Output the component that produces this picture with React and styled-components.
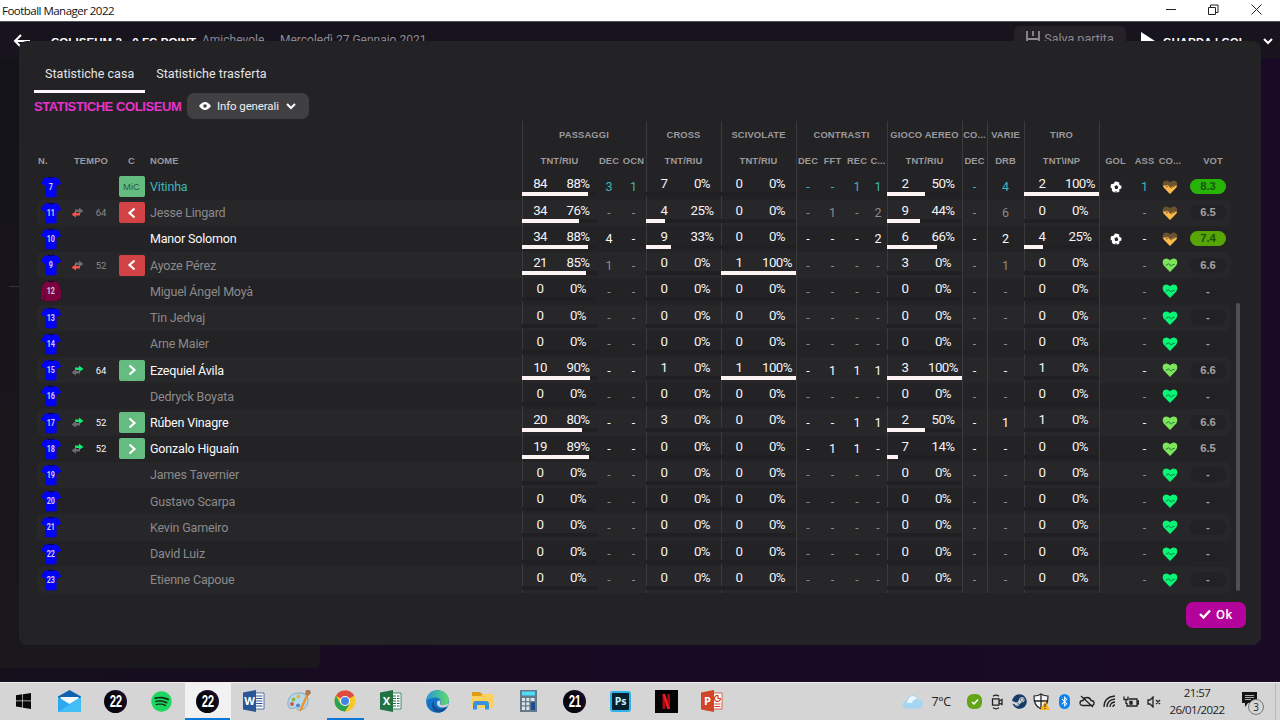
import * as React from 'react';
import styled, { createGlobalStyle, css } from 'styled-components';
import { FaSpotify, FaSteam, FaBluetoothB } from 'react-icons/fa';

const GlobalStyle = createGlobalStyle`
  * {
    box-sizing: border-box;
  }

  body {
    margin: 0;
    overflow: hidden;
    background: #170a21;
    font-family: Roboto, 'Liberation Sans', sans-serif;
  }

  svg {
    display: block;
    flex: none;
  }
`;

const Screen = styled.div`
  position: relative;
  width: 1280px;
  height: 720px;
  overflow: hidden;
  display: flex;
  flex-direction: column;
`;

/* window title bar */

const TitleBar = styled.div`
  height: 22px;
  flex: none;
  display: flex;
  align-items: center;
  justify-content: space-between;
  padding: 0 18px 0 2px;
  background: #fff;
  color: #111;
  font-family: 'Open Sans', sans-serif;
  font-size: 11.5px;
  letter-spacing: -0.52px;
  border-bottom: 1px solid #55525a;
`;

const WindowButtons = styled.div`
  display: flex;
  gap: 32px;
  margin-top: -2px;
`;

/* game screen behind the dialog */

const Game = styled.div`
  height: 660px;
  flex: none;
  display: flex;
  flex-direction: column;
  background: linear-gradient(90deg, #16101d 0%, #170a21 35%, #1a0a26 100%);
`;

const GameHeader = styled.div`
  height: 37px;
  flex: none;
  display: flex;
  align-items: center;
  padding: 0 7px 0 13px;
  background: #18141d;
  color: #8d8a91;
  font-size: 12px;
  white-space: nowrap;
`;

const MatchTitle = styled.div`
  margin: 0 5px 0 20px;
  padding-top: 2px;
  width: 146px;
  color: #fff;
  font-family: 'Liberation Sans', sans-serif;
  font-size: 11.5px;
  font-weight: 700;
  letter-spacing: 0.06px;
`;

const MatchInfo = styled.div`
  width: ${(props) => props.$width}px;
  margin-top: -1px;
`;

const SaveButton = styled.div`
  margin-left: auto;
  width: 112px;
  height: 28px;
  margin-top: -1px;
  padding-bottom: 4px;
  display: flex;
  align-items: center;
  justify-content: center;
  gap: 4px;
  border-radius: 6px;
  background: #252129;
  color: #8e8b90;
  font-size: 12.5px;
`;

const WatchButton = styled.div`
  display: flex;
  align-items: center;
  gap: 8px;
  margin-left: 15px;
  width: 122px;
  color: #fff;
  font-family: 'Liberation Sans', sans-serif;
  font-size: 11px;
  font-weight: 700;
  letter-spacing: 0.15px;
`;

const WatchLabel = styled.span`
  padding-top: 2px;
`;

const SidePanel = styled.div`
  width: 320px;
  height: 609px;
  border-radius: 0 0 6px 0;
  background: linear-gradient(180deg, #15131a, #1a181c);
`;

const PanelRule = styled.div`
  height: 228px;
  margin-left: 9px;
  border-bottom: 1px solid #37343a;
`;

/* dialog */

const Dialog = styled.div`
  position: absolute;
  left: 19px;
  top: 41px;
  width: 1242px;
  height: 604px;
  padding: 15px 15px 16px;
  display: flex;
  flex-direction: column;
  border-radius: 8px;
  background: #232224;
`;

const Tabs = styled.div`
  height: 37px;
  flex: none;
  display: flex;
`;

const Tab = styled.div`
  height: 37px;
  padding: 0 11px;
  line-height: 35px;
  color: #e6e4e6;
  font-size: 12.5px;
  letter-spacing: 0.03px;
  border-bottom: 3px solid ${(props) => (props.$active ? '#fdf6fa' : 'transparent')};
`;

const Toolbar = styled.div`
  height: 28px;
  flex: none;
  display: flex;
  align-items: flex-start;
  gap: 5px;
`;

const Heading = styled.div`
  width: 148px;
  line-height: 28px;
  color: #e832cd;
  font-family: 'Liberation Sans', sans-serif;
  font-size: 13px;
  font-weight: 700;
  letter-spacing: -0.4px;
  white-space: nowrap;
`;

const ViewSelect = styled.div`
  width: 122px;
  height: 26px;
  display: flex;
  align-items: center;
  padding: 0 13px 0 12px;
  border-radius: 7px;
  background: #403f41;
  color: #f0eef0;
  font-size: 11.5px;
  letter-spacing: -0.12px;
`;

const ViewLabel = styled.span`
  flex: 1;
  padding-left: 6px;
`;

const TableArea = styled.div`
  display: flex;
  gap: 5px;
  padding-left: 3px;
`;

const Table = styled.div`
  width: 1194px;
`;

const gridColumns = `27px 26px 22px 38px 372px 75px 24px 25px 75px 75px
  24px 25px 24px 18px 75px 25px 37px 75px 33px 25px 26px 48px`;

const separator = css`
  box-shadow: inset 1px 0 0 #3b3a3c;
`;

const HeaderRow = styled.div`
  display: grid;
  grid-template-columns: ${gridColumns};
  height: 26.22px;
`;

const HeaderCell = styled.div`
  grid-column: span ${(props) => props.$span || 1};
  display: flex;
  align-items: center;
  justify-content: ${(props) => props.$align || 'center'};
  padding: ${(props) => props.$pad || '0'};
  color: #9b999b;
  font-family: 'Liberation Sans', sans-serif;
  font-size: 9.4px;
  font-weight: 700;
  letter-spacing: 0.14px;
  white-space: nowrap;
  ${(props) => props.$line && separator}
`;

const tones = {
  self: '#40b4ba',
  dim: '#8c8a8c',
  bright: '#fbf9fb',
};

const Row = styled.div`
  display: grid;
  grid-template-columns: ${gridColumns};
  height: 26.22px;
  border-radius: 5px;
  background: ${(props) => (props.$odd ? '#272628' : 'transparent')};
  color: ${(props) => tones[props.$tone]};
`;

const Cell = styled.div`
  display: flex;
  align-items: center;
  justify-content: center;
  font-size: 12.5px;
  ${(props) => props.$line && separator}
`;

const NameCell = styled(Cell)`
  justify-content: flex-start;
  font-size: 12.5px;
  letter-spacing: -0.18px;
  white-space: nowrap;
`;

const MinuteCell = styled(Cell)`
  font-size: 9.5px;
`;

const RoleBadge = styled.div`
  width: 26px;
  height: 21px;
  margin-left: 1px;
  display: flex;
  align-items: center;
  justify-content: center;
  border-radius: 2px;
  background: ${(props) => (props.$out ? '#d24346' : '#65bc80')};
  color: #2c5b3b;
  font-family: 'Liberation Sans', sans-serif;
  font-size: 9.5px;
`;

const RatioCell = styled.div`
  display: flex;
  flex-direction: column;
  padding-top: 2px;
  ${separator}
`;

const RatioValues = styled.div`
  display: grid;
  grid-template-columns: 36px 40px;
  height: 17px;
  line-height: 18px;
  text-align: center;
  color: #f5f3f5;
  font-size: 13.3px;
  letter-spacing: -0.6px;
`;

const Track = styled.div`
  height: 4px;
  background: #201f21;
`;

const Fill = styled.div`
  height: 4px;
  background: #fdf3f3;
`;

const VoteCell = styled(Cell)`
  justify-content: flex-start;
  padding-left: 7px;
`;

const Vote = styled.div`
  width: 36px;
  height: 15px;
  line-height: 15px;
  text-align: center;
  border-radius: 8px;
  background: ${(props) => props.$color || '#222123'};
  color: ${(props) => (props.$color ? '#17570c' : '#a3a1a3')};
  font-family: 'Liberation Sans', sans-serif;
  font-size: 11.3px;
  font-weight: 700;
`;

const Scrollbar = styled.div`
  width: 4px;
  height: 288px;
  margin-top: 182px;
  border-radius: 2px;
  background: #504f51;
`;

const DialogFooter = styled.div`
  margin-top: 9px;
  display: flex;
  justify-content: flex-end;
`;

const OkButton = styled.div`
  width: 60px;
  height: 26px;
  display: flex;
  align-items: center;
  justify-content: center;
  gap: 5px;
  padding-bottom: 1px;
  border-radius: 7px;
  background: #b3039a;
  color: #fff;
  font-size: 13px;
  font-weight: 500;
  letter-spacing: 0.6px;
`;

/* taskbar */

const Taskbar = styled.div`
  height: 38px;
  flex: none;
  display: flex;
  background: #d5d5d5;
  border-top: 1px solid #efefef;
  color: #222;
  font-family: 'Open Sans', sans-serif;
`;

const TaskItem = styled.div`
  width: ${(props) => props.$width || 45.9}px;
  height: 37px;
  display: flex;
  align-items: center;
  justify-content: center;
  padding-bottom: 1px;
  background: ${(props) => (props.$active ? '#f1f1f1' : 'transparent')};
`;

const RunningItem = styled(TaskItem)`
  padding: 1px 0 0;
  flex-direction: column;
  justify-content: space-between;
`;

const RunningLine = styled.div`
  width: ${(props) => props.$width}px;
  height: 2px;
  background: #0a78d6;
`;

const RunningIcon = styled.div`
  flex: 1;
  display: flex;
  align-items: center;
`;

const GameLogo = styled.div`
  width: 23px;
  height: 23px;
  display: flex;
  align-items: center;
  justify-content: center;
  border-radius: 50%;
  background: radial-gradient(circle at 30% 60%, #08060d 45%, #2c1242);
  color: #fff;
  font-family: 'Liberation Sans', sans-serif;
  font-size: 13px;
  font-weight: 700;
  letter-spacing: -0.5px;
`;

const Condensed = styled.span`
  transform: scale(0.88, 1.2);
`;

const SpotifyDisc = styled.div`
  border-radius: 50%;
  background: radial-gradient(circle, #10301c 60%, transparent 62%);
`;

const Photoshop = styled.div`
  width: 21px;
  height: 21px;
  display: flex;
  align-items: center;
  justify-content: center;
  border: 2px solid #2cb3e8;
  border-radius: 3px;
  background: #07202f;
  color: #c9f0ff;
  font-size: 10.5px;
  font-weight: 700;
`;

const Tray = styled.div`
  margin-left: auto;
  display: flex;
  align-items: center;
`;

const TrayItem = styled.div`
  width: 22.4px;
  display: flex;
  align-items: center;
  justify-content: center;
`;

const Temperature = styled.div`
  width: 40px;
  padding-left: 8px;
  font-size: 12.5px;
  letter-spacing: -0.4px;
`;

const Dot = styled.div`
  width: ${(props) => props.$width || 15}px;
  height: 15px;
  display: flex;
  align-items: center;
  justify-content: center;
  border-radius: 6px;
  background: ${(props) => props.$color};
  color: #fff;
  font-size: 11px;
`;

const Clock = styled.div`
  width: 65px;
  padding: 0 1px 2px 0;
  text-align: center;
  font-size: 11.5px;
  line-height: 17px;
  letter-spacing: -0.6px;
`;

const Notifications = styled.div`
  width: 46px;
  height: 37px;
  padding: 9px 0 0 12px;
  margin-right: 4px;
  position: relative;
  border-right: 1px solid #b9b9b9;
`;

const Count = styled.div`
  position: absolute;
  left: 18px;
  top: 16px;
  width: 16px;
  height: 16px;
  line-height: 14px;
  text-align: center;
  border: 1px solid #777;
  border-radius: 50%;
  background: #d5d5d5;
  font-size: 10px;
`;

/* icons */

function Shirt({ number, keeper }) {
  const fill = keeper ? '#7d0340' : '#0202f5';
  return (
    <svg width="22" height="22" viewBox="0 0 22 22">
      {keeper ? (
        <path d="M7.500 1h7l4.500 2.500L21 11v8.500h-3V21H4v-1.500H1V11l2-7.500zM4.500 11v9M17.500 11v9" fill={fill} stroke="#3c0421" strokeWidth="0.400" />
      ) : (
        <path d="M8 1h6l4 1.300 3.200 5.200-4 2.200-.7-.5V21q-5.400.8-10.900 0V9.200l-.7.500-4-2.200 3.200-5.200z" fill={fill} />
      )}
      <path d="M8 1q3 2 6 0" fill="none" stroke="#050535" strokeWidth="1" />
      <text
        transform="translate(10.800 13.600) scale(0.8 1.1)"
        textAnchor="middle"
        fill="#cfcde0"
        fontFamily="Roboto, sans-serif"
        fontSize="9"
        fontWeight="700"
      >
        {number}
      </text>
    </svg>
  );
}

function SwapIcon({ incoming }) {
  return (
    <svg width="13" height="11" viewBox="0 0 13 11">
      <path d="M4 2.500h4V.500L12.500 4 8 7V5H4z" fill={incoming ? '#10ea70' : '#6c6b6d'} />
      <path d="M9 6H5V4L.500 7.500 5 10.500v-2h4z" fill={incoming ? '#6c6b6d' : '#f4524f'} />
    </svg>
  );
}

function Angle({ right }) {
  return (
    <svg width="10" height="12" viewBox="0 0 10 12" fill="none" stroke="#fff" strokeWidth="2.200">
      <path d={right ? 'M2.500 1.500L7.500 6l-5 4.500' : 'M7.500 1.500L2.500 6l5 4.500'} />
    </svg>
  );
}

function Chevron({ size = 10 }) {
  return (
    <svg width={size} height={size} viewBox="0 0 10 10" fill="none" stroke="#fff" strokeWidth="2">
      <path d="M1 3l4 4 4-4" />
    </svg>
  );
}

function Heart({ kind }) {
  const top = { tired: '#6a5130', good: '#7de45b', full: '#08f676' }[kind];
  const d = 'M8 15L1.700 8.500Q-.3 5.300 1.600 2.600 4.900.3 8 3.200q3.100-2.900 6.400-.6Q16.300 5.300 14.300 8.500z';
  return (
    <svg width="16" height="16" viewBox="0 0 16 16">
      <path d={d} fill={top} />
      {kind === 'tired' && <path d="M.8 6.500h3.700L6 5.800l3 2.500 2-1.500h4.200l-.9 1.700L8 15 1.700 8.500z" fill="#fdbb4c" />}
      <path
        d="M3.800 8h1L6.300 6.700l3 2.300L11 7.500h1.500"
        fill="none"
        stroke={kind === 'tired' ? '#71501f' : '#176b3c'}
        strokeWidth="0.9"
      />
    </svg>
  );
}

function Ball() {
  return (
    <svg width="12" height="12" viewBox="0 0 12 12">
      <circle cx="6" cy="6" r="5.500" fill="#fff" />
      <path d="M6.500 4l1.800 1.700-.8 2.200H5.200l-.8-2.400z" fill="#232224" />
      <path d="M3.200 0l1.500 1.700L3 3 .5 2.700zM9.500 1.200l2 2-.8 1.600L9 3.200zM.3 6.500l1.500.8.3 2.200-1.300-.3zM11.700 8l-1.500 2.300-1.200-.8.800-1.700zM4.500 10.500h2.500L6 12z" fill="#232224" />
    </svg>
  );
}

function OfficeIcon({ letter, color }) {
  return (
    <svg width="22" height="22" viewBox="0 0 22 22">
      <path d="M11 3h10v16H11z" fill="#fff" stroke={color} strokeWidth="0.800" />
      {letter === 'P' ? (
        <path d="M13.500 14h6M13.500 16.500h6M17 5.500a3 3 0 1 0 2.500 3H17z" fill="none" stroke={color} strokeWidth="1.200" />
      ) : (
        <path d="M13 6h6.500M13 8.500h6.500M13 11h6.500M13 13.500h6.500M13 16h6.500" stroke={color} strokeWidth="1.100" />
      )}
      {letter === 'X' && <path d="M16.500 4v14" stroke="#fff" />}
      <path d="M0 2.500L13 0v22L0 19.500z" fill={color} />
      <text x="6.500" y="15.200" textAnchor="middle" fill="#fff" fontFamily="Open Sans, sans-serif" fontSize="11" fontWeight="700">
        {letter}
      </text>
    </svg>
  );
}

function WindowsIcon() {
  return (
    <svg width="15" height="16" viewBox="0 0 15 16" fill="#080808">
      <path d="M0 2.200l6.300-.9v6.200H0zM7 1.200L15 0v7.500H7zM0 8.300h6.300v6.200L0 13.600zM7 8.300h8V16l-8-1.200z" />
    </svg>
  );
}

function MailIcon() {
  return (
    <svg width="23" height="22" viewBox="0 0 23 22">
      <path d="M0 6.500L11.500 0 23 6.500V15H0z" fill="#0f62ae" />
      <path d="M2.500 7h18v9h-18z" fill="#f4f8fb" />
      <path d="M0 7l11.500 7L23 7v15H0z" fill="#2ba8ee" />
      <path d="M0 22L23 7v15z" fill="#43bdf5" />
    </svg>
  );
}

function PaintIcon() {
  return (
    <svg width="24" height="24" viewBox="0 0 24 24">
      <path d="M11 4C4 4.500 0 10 1 16q1.500 5 5.500 3c3-1.500 3 2.500 7 2 5-.7 8-6 7.500-11Q20 3.500 11 4z" fill="#b6d9ec" stroke="#7daac5" />
      <circle cx="6.500" cy="10.500" r="1.900" fill="#8cb942" />
      <circle cx="11.500" cy="7.500" r="1.900" fill="#e8b43c" />
      <circle cx="5" cy="15" r="1.900" fill="#d84f46" />
      <circle cx="11" cy="16.500" r="2" fill="#5282c7" />
      <path d="M20 4l2 1-7 16-2.500 2 .5-4z" fill="#ef932c" />
      <path d="M19 1l4 0 1 3-3 3-3-2z" fill="#a87b50" />
    </svg>
  );
}

function ChromeIcon() {
  return (
    <svg width="22" height="22" viewBox="0 0 22 22">
      <circle cx="11" cy="11" r="10.500" fill="#f7c829" />
      <path d="M11 11L1.900 5.800A10.500 10.500 0 0 1 20.100 5.800z" fill="#df4b3e" />
      <path d="M11 5.500h9A10.500 10.500 0 0 0 11 .5z" fill="#df4b3e" />
      <path d="M1.900 5.800A10.500 10.500 0 0 0 11 21.500l4.700-7.800L11 16l-4.700-2.600z" fill="#2ba152" />
      <circle cx="11" cy="11" r="5" fill="#fff" />
      <circle cx="11" cy="11" r="4" fill="#4285e8" />
    </svg>
  );
}

function EdgeIcon() {
  return (
    <svg width="23" height="23" viewBox="0 0 23 23">
      <defs>
        <linearGradient id="edge-top" x1="0" x2="1">
          <stop offset="0" stopColor="#2498dc" />
          <stop offset="1" stopColor="#61dc67" />
        </linearGradient>
      </defs>
      <circle cx="11.500" cy="11.500" r="11.300" fill="#1174c7" />
      <path d="M.2 11C1 4 6 .2 11.500.2c7 0 11.300 5 11.300 9.500 0 4-3 6-6 5.600-2.300-.2-3-1.300-2-3 .7-4-5-6-9.300-4Q1.500 9 .2 11z" fill="url(#edge-top)" />
      <path d="M8.500 10c-2.500 4 1 9 6 9q4-.2 7-3-2 5.500-8 6.500c-7 .5-10-8-5-12.500z" fill="#124f93" />
      <path d="M14.500 11.500c-1 2-.5 3.800 2.300 3.800q3 0 5.900-2.300-.3 2-1.700 3.500c-5 2.500-11 .5-10-4.500 1-2 3-2 3.500-.5z" fill="#d5d5d5" />
    </svg>
  );
}

function FolderIcon() {
  return (
    <svg width="21" height="18" viewBox="0 0 21 18">
      <path d="M0 0h8l2 2h10v4H0z" fill="#dc9d15" />
      <path d="M0 4h9l2-2h10v14H0z" fill="#fcd15c" />
      <path d="M1 17.500V12q0-3 3-3h10q3 0 3 3v5.500h-4V13H5v4.500z" fill="#3a92dc" />
    </svg>
  );
}

function CalculatorIcon() {
  return (
    <svg width="17" height="22" viewBox="0 0 17 22">
      <path d="M0 0h17v22H0z" fill="#66798a" />
      <path d="M2 1.500h13v4H2z" fill="#4fdcf5" />
      <path
        d="M2 8h3v3H2zM6.300 8h3v3h-3zM10.600 8h4v3h-4zM2 12.300h3v3H2zM6.300 12.300h3v3h-3zM2 16.600h3v3.400H2zM6.300 16.600h3v3.400h-3z"
        fill="#dce4ea"
      />
      <path d="M11 12.300h4V20h-4z" fill="#184e94" />
    </svg>
  );
}

function NetflixIcon() {
  return (
    <svg width="23" height="23" viewBox="0 0 23 23">
      <path d="M0 0h23v23H0z" fill="#050505" />
      <path d="M7.500 4h2.600v15H7.500zM12.300 4h2.600v15h-2.600z" fill="#b20710" />
      <path d="M7.500 4h2.600l4.800 15h-2.600z" fill="#ee1c24" />
    </svg>
  );
}

function WeatherIcon() {
  return (
    <svg width="21" height="15" viewBox="0 0 21 15">
      <path d="M5 14.500C-1 14.500-1 7.500 4 7.500 5 0 14-1.500 15.500 5c7-.5 7 9.500.5 9.500z" fill="#a6d5f4" />
      <path d="M5 9C6 1 13 0 15 5q-4 0-5 4z" fill="#eaf6fd" />
    </svg>
  );
}

const strokeProps = { fill: 'none', stroke: '#222', strokeWidth: 1.3 };

function CameraIcon() {
  return (
    <svg width="12" height="16" viewBox="0 0 12 16" {...strokeProps}>
      <path d="M1.500 4.800h6.500v6.400H1.500zM8 7l3-1.500v5L8 9M2 2.200q3-2 6 0M2 13.800q3 2 6 0" />
    </svg>
  );
}

function ShieldIcon() {
  return (
    <svg width="17" height="17" viewBox="0 0 17 17">
      <path d="M8 1Q5 3 1 3c0 6 1 10 7 13 6-3 7-7 7-13Q11 3 8 1z" fill="#f4f4f4" stroke="#222" strokeWidth="1.200" />
      <path d="M8 1v15M1.500 8h13" stroke="#222" strokeWidth="1.300" />
      <path d="M12 8l5 9H7z" fill="#f8b51d" />
      <path d="M12 11v3M12 15v1" stroke="#222" />
    </svg>
  );
}

function CloudOffIcon() {
  return (
    <svg width="16" height="13" viewBox="0 0 16 13" {...strokeProps}>
      <path d="M4 10.500c-4 0-4-5 0-5 1-4 7-4 8 0 4 0 4 5 .5 5zM2 1l12 11" />
    </svg>
  );
}

function WifiIcon() {
  return (
    <svg width="13" height="13" viewBox="0 0 13 13" {...strokeProps}>
      <path d="M1 12Q1 2 12 1M4 12q0-7 8-8M7 12q0-4.500 5-5M10 12q0-2 2-2" />
    </svg>
  );
}

function BatteryIcon() {
  return (
    <svg width="16" height="12" viewBox="0 0 16 12" {...strokeProps}>
      <path d="M6 3h8v7H4V7M14 5h1.500v3H14M1 .5v3h4v-3M3 3.500V8" />
      <path d="M7 5.500h2v2.500H7z" fill="#222" />
    </svg>
  );
}

function MutedIcon() {
  return (
    <svg width="14" height="12" viewBox="0 0 14 12" {...strokeProps}>
      <path d="M1 4h2l3-3v10L3 8H1zM9 4l4 4M13 4L9 8" />
    </svg>
  );
}

const NONE = ['-', '-', '-', '-', '-', '-', '-', '-'];

// stats: passes dec, ocn, tackles dec, fft, rec, c..., clearances dec, dribbles
function player(number, name, extra = {}) {
  return {
    number,
    name,
    tone: 'dim',
    passes: [0, 0],
    crosses: [0, 0],
    slides: [0, 0],
    aerial: [0, 0],
    shots: [0, 0],
    stats: NONE,
    heart: 'full',
    vote: '-',
    ...extra,
  };
}

const players = [
  player(7, 'Vitinha', {
    tone: 'self', role: 'MiC', passes: [84, 88], crosses: [7, 0], aerial: [2, 50], shots: [2, 100],
    stats: ['3', '1', '-', '-', '1', '1', '-', '4'], goal: true, assist: '1', heart: 'tired', vote: '8.3', voteColor: '#28b406',
  }),
  player(11, 'Jesse Lingard', {
    minute: 64, role: 'out', passes: [34, 76], crosses: [4, 25], aerial: [9, 44],
    stats: ['-', '-', '-', '1', '-', '2', '-', '6'], heart: 'tired', vote: '6.5',
  }),
  player(10, 'Manor Solomon', {
    tone: 'bright', passes: [34, 88], crosses: [9, 33], aerial: [6, 66], shots: [4, 25],
    stats: ['4', '-', '-', '-', '-', '2', '-', '2'], goal: true, heart: 'tired', vote: '7.4', voteColor: '#58a506',
  }),
  player(9, 'Ayoze Pérez', {
    minute: 52, role: 'out', passes: [21, 85], slides: [1, 100], aerial: [3, 0],
    stats: ['1', '-', '-', '-', '-', '-', '-', '1'], heart: 'good', vote: '6.6',
  }),
  player(12, 'Miguel Ángel Moyà', { keeper: true }),
  player(13, 'Tin Jedvaj'),
  player(14, 'Arne Maier'),
  player(15, 'Ezequiel Ávila', {
    tone: 'bright', minute: 64, role: 'in', passes: [10, 90], crosses: [1, 0], slides: [1, 100], aerial: [3, 100], shots: [1, 0],
    stats: ['-', '-', '-', '1', '1', '1', '-', '-'], heart: 'good', vote: '6.6',
  }),
  player(16, 'Dedryck Boyata'),
  player(17, 'Rúben Vinagre', {
    tone: 'bright', minute: 52, role: 'in', passes: [20, 80], crosses: [3, 0], aerial: [2, 50], shots: [1, 0],
    stats: ['-', '-', '-', '-', '1', '1', '-', '1'], heart: 'good', vote: '6.6',
  }),
  player(18, 'Gonzalo Higuaín', {
    tone: 'bright', minute: 52, role: 'in', passes: [19, 89], aerial: [7, 14],
    stats: ['-', '-', '-', '1', '1', '-', '-', '-'], heart: 'good', vote: '6.5',
  }),
  player(19, 'James Tavernier'),
  player(20, 'Gustavo Scarpa'),
  player(21, 'Kevin Gameiro'),
  player(22, 'David Luiz'),
  player(23, 'Etienne Capoue'),
];

function Ratio({ value }) {
  return (
    <RatioCell>
      <RatioValues>
        <span>{value[0]}</span>
        <span>{value[1]}%</span>
      </RatioValues>
      <Track>
        <Fill style={{ width: `${value[1]}%` }} />
      </Track>
    </RatioCell>
  );
}

function Role({ role }) {
  if (!role) return null;
  if (role === 'MiC') return <RoleBadge>MiC</RoleBadge>;
  return (
    <RoleBadge $out={role === 'out'}>
      <Angle right={role === 'in'} />
    </RoleBadge>
  );
}

function PlayerRow({ data, odd }) {
  const s = data.stats;
  return (
    <Row $odd={odd} $tone={data.tone}>
      <Cell>
        <Shirt number={data.number} keeper={data.keeper} />
      </Cell>
      <Cell>{data.minute && <SwapIcon incoming={data.role === 'in'} />}</Cell>
      <MinuteCell>{data.minute}</MinuteCell>
      <Cell>
        <Role role={data.role} />
      </Cell>
      <NameCell>{data.name}</NameCell>
      <Ratio value={data.passes} />
      <Cell>{s[0]}</Cell>
      <Cell>{s[1]}</Cell>
      <Ratio value={data.crosses} />
      <Ratio value={data.slides} />
      <Cell $line>{s[2]}</Cell>
      <Cell>{s[3]}</Cell>
      <Cell>{s[4]}</Cell>
      <Cell>{s[5]}</Cell>
      <Ratio value={data.aerial} />
      <Cell $line>{s[6]}</Cell>
      <Cell $line>{s[7]}</Cell>
      <Ratio value={data.shots} />
      <Cell $line>{data.goal && <Ball />}</Cell>
      <Cell>{data.assist || '-'}</Cell>
      <Cell>
        <Heart kind={data.heart} />
      </Cell>
      <VoteCell>
        <Vote $color={data.voteColor}>{data.vote}</Vote>
      </VoteCell>
    </Row>
  );
}

function StatsTable() {
  return (
    <Table>
      <HeaderRow>
        <HeaderCell $span={5} />
        <HeaderCell $span={3} $line>PASSAGGI</HeaderCell>
        <HeaderCell $line>CROSS</HeaderCell>
        <HeaderCell $line>SCIVOLATE</HeaderCell>
        <HeaderCell $span={4} $line>CONTRASTI</HeaderCell>
        <HeaderCell $line>GIOCO AEREO</HeaderCell>
        <HeaderCell $line>CO...</HeaderCell>
        <HeaderCell $line>VARIE</HeaderCell>
        <HeaderCell $line>TIRO</HeaderCell>
        <HeaderCell $span={4} $line />
      </HeaderRow>
      <HeaderRow>
        <HeaderCell $align="flex-start" $pad="0 0 0 1px">N.</HeaderCell>
        <HeaderCell $span={2} $pad="0 0 0 6px">TEMPO</HeaderCell>
        <HeaderCell $pad="0 0 0 1px">C</HeaderCell>
        <HeaderCell $align="flex-start">NOME</HeaderCell>
        <HeaderCell $line>TNT/RIU</HeaderCell>
        <HeaderCell>DEC</HeaderCell>
        <HeaderCell>OCN</HeaderCell>
        <HeaderCell $line>TNT/RIU</HeaderCell>
        <HeaderCell $line>TNT/RIU</HeaderCell>
        <HeaderCell $line>DEC</HeaderCell>
        <HeaderCell>FFT</HeaderCell>
        <HeaderCell>REC</HeaderCell>
        <HeaderCell>C...</HeaderCell>
        <HeaderCell $line>TNT/RIU</HeaderCell>
        <HeaderCell $line>DEC</HeaderCell>
        <HeaderCell $line>DRB</HeaderCell>
        <HeaderCell $line>TNT\INP</HeaderCell>
        <HeaderCell $line>GOL</HeaderCell>
        <HeaderCell>ASS</HeaderCell>
        <HeaderCell>CO...</HeaderCell>
        <HeaderCell $pad="0 0 0 12px">VOT</HeaderCell>
      </HeaderRow>
      {players.map((data, i) => (
        <PlayerRow key={data.number} data={data} odd={i % 2 === 1} />
      ))}
    </Table>
  );
}

function App() {
  return (
    <Screen>
      <GlobalStyle />
      <TitleBar>
        <span>Football Manager 2022</span>
        <WindowButtons>
          <svg width="10" height="11" viewBox="0 0 10 11" stroke="#222">
            <path d="M0 5.500h10" />
          </svg>
          <svg width="11" height="11" viewBox="0 0 11 11" fill="none" stroke="#222">
            <path d="M.5 3.500h7v7h-7zM2.500 3.500v-2.500h7.500v7.500H7.500" />
          </svg>
          <svg width="11" height="11" viewBox="0 0 11 11" stroke="#222">
            <path d="M.5.5l10 10M10.500.5l-10 10" />
          </svg>
        </WindowButtons>
      </TitleBar>
      <Game>
        <GameHeader>
          <svg width="18" height="14" viewBox="0 0 18 14" fill="none" stroke="#fff" strokeWidth="2">
            <path d="M8 1L2 7l6 6M2 7h15" />
          </svg>
          <MatchTitle>COLISEUM 2 - 0 FC POINT</MatchTitle>
          <MatchInfo $width={78}>Amichevole</MatchInfo>
          <MatchInfo $width={150}>Mercoledì 27 Gennaio 2021</MatchInfo>
          <SaveButton>
            <svg width="14" height="14" viewBox="0 0 14 14" fill="none" stroke="#8e8b90" strokeWidth="1.800">
              <path d="M1 0v13h12V0M1 8h12M7 0v5" />
            </svg>
            Salva partita
          </SaveButton>
          <WatchButton>
            <svg width="14" height="18" viewBox="0 0 14 18" fill="#fff">
              <path d="M0 0l14 9-14 9z" />
            </svg>
            <WatchLabel>GUARDA I GOL</WatchLabel>
          </WatchButton>
          <Chevron />
        </GameHeader>
        <SidePanel>
          <PanelRule />
        </SidePanel>
      </Game>
      <Taskbar>
        <TaskItem $width={47}>
          <WindowsIcon />
        </TaskItem>
        <TaskItem>
          <MailIcon />
        </TaskItem>
        <TaskItem>
          <GameLogo>
            <Condensed>22</Condensed>
          </GameLogo>
        </TaskItem>
        <TaskItem>
          <SpotifyDisc>
            <FaSpotify size={21} color="#1ed760" />
          </SpotifyDisc>
        </TaskItem>
        <RunningItem $active>
          <RunningIcon>
            <GameLogo>
              <Condensed>22</Condensed>
            </GameLogo>
          </RunningIcon>
          <RunningLine $width={45} />
        </RunningItem>
        <TaskItem>
          <OfficeIcon letter="W" color="#2a5697" />
        </TaskItem>
        <TaskItem>
          <PaintIcon />
        </TaskItem>
        <RunningItem>
          <RunningIcon>
            <ChromeIcon />
          </RunningIcon>
          <RunningLine $width={37} />
        </RunningItem>
        <TaskItem>
          <OfficeIcon letter="X" color="#217346" />
        </TaskItem>
        <TaskItem>
          <EdgeIcon />
        </TaskItem>
        <TaskItem>
          <FolderIcon />
        </TaskItem>
        <TaskItem>
          <CalculatorIcon />
        </TaskItem>
        <TaskItem>
          <GameLogo>
            <Condensed>21</Condensed>
          </GameLogo>
        </TaskItem>
        <TaskItem>
          <Photoshop>Ps</Photoshop>
        </TaskItem>
        <TaskItem>
          <NetflixIcon />
        </TaskItem>
        <TaskItem>
          <OfficeIcon letter="P" color="#d04526" />
        </TaskItem>
        <Tray>
          <WeatherIcon />
          <Temperature>7°C</Temperature>
          <TrayItem>
            <Dot $color="#63a517">
              <svg width="8" height="8" viewBox="0 0 8 8" fill="none" stroke="#fff" strokeWidth="1.500">
                <path d="M1 4l2 2 4-4.500" />
              </svg>
            </Dot>
          </TrayItem>
          <TrayItem>
            <CameraIcon />
          </TrayItem>
          <TrayItem>
            <FaSteam size={15} color="#173a67" />
          </TrayItem>
          <TrayItem>
            <ShieldIcon />
          </TrayItem>
          <TrayItem>
            <Dot $color="#0a84f0" $width={11}>
              <FaBluetoothB />
            </Dot>
          </TrayItem>
          <TrayItem>
            <CloudOffIcon />
          </TrayItem>
          <TrayItem>
            <WifiIcon />
          </TrayItem>
          <TrayItem>
            <BatteryIcon />
          </TrayItem>
          <TrayItem>
            <MutedIcon />
          </TrayItem>
          <Clock>
            <div>21:57</div>
            <div>26/01/2022</div>
          </Clock>
          <Notifications>
            <svg width="15" height="15" viewBox="0 0 15 15">
              <path d="M0 0h15v11H6l-3 4v-4H0z" fill="#151515" />
              <path d="M3 3.500h9M3 5.500h9M3 7.500h6" stroke="#d5d5d5" strokeWidth="0.800" />
            </svg>
            <Count>3</Count>
          </Notifications>
        </Tray>
      </Taskbar>
      <Dialog>
        <Tabs>
          <Tab $active>Statistiche casa</Tab>
          <Tab>Statistiche trasferta</Tab>
        </Tabs>
        <Toolbar>
          <Heading>STATISTICHE COLISEUM</Heading>
          <ViewSelect>
            <svg width="12" height="8" viewBox="0 0 12 8">
              <path d="M0 4q6-8 12 0-6 8-12 0z" fill="#fff" />
              <circle cx="6" cy="4" r="1.800" fill="#403f41" />
            </svg>
            <ViewLabel>Info generali</ViewLabel>
            <Chevron />
          </ViewSelect>
        </Toolbar>
        <TableArea>
          <StatsTable />
          <Scrollbar />
        </TableArea>
        <DialogFooter>
          <OkButton>
            <svg width="12" height="10" viewBox="0 0 12 10" fill="none" stroke="#fff" strokeWidth="2.400">
              <path d="M1 5l3.500 3.500L11 1.500" />
            </svg>
            Ok
          </OkButton>
        </DialogFooter>
      </Dialog>
    </Screen>
  );
}

export default App;
